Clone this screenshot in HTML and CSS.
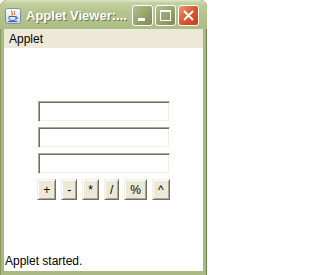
FILE: index.html
```html
<!DOCTYPE html>
<html>
<head>
<meta charset="utf-8">
<link rel="stylesheet" href="styles.css">
</head>
<body>
<div class="window">
  <div class="titlebar">
    <svg class="appicon" width="16" height="16" viewBox="0 0 16 16">
      <defs>
        <linearGradient id="ig" x1="0" y1="0" x2="0" y2="1">
          <stop offset="0" stop-color="#ffffff"/>
          <stop offset="1" stop-color="#c9d6ea"/>
        </linearGradient>
      </defs>
      <rect x="0.5" y="0.5" width="15" height="15" rx="2" fill="url(#ig)" stroke="#7f8fa8"/>
      <path d="M7 2.5 C5.5 4 8.5 5 7 7.5" fill="none" stroke="#e8761e" stroke-width="1.3"/>
      <path d="M9.5 3 C8.5 4.5 10.5 5 9.5 7" fill="none" stroke="#e8761e" stroke-width="1"/>
      <path d="M4 8.5 H11 V10.5 C11 12 9.5 12.5 7.5 12.5 C5.5 12.5 4 12 4 10.5 Z" fill="none" stroke="#3a66b0" stroke-width="1"/>
      <path d="M11 9 C13 9 13 11 11 11" fill="none" stroke="#3a66b0" stroke-width="1"/>
      <path d="M3 13.5 H12" stroke="#3a66b0" stroke-width="1"/>
    </svg>
    <span class="title">Applet Viewer:...</span>
    <div class="controls">
      <div class="ctl ctl-min">
        <svg width="21" height="21" viewBox="0 0 21 21"><rect x="6" y="13" width="7" height="3" fill="#fff"/></svg>
      </div>
      <div class="ctl ctl-max">
        <svg width="21" height="21" viewBox="0 0 21 21"><rect x="5.5" y="5.5" width="10" height="10" fill="none" stroke="#fff"/><rect x="5" y="5" width="11" height="2" fill="#fff"/></svg>
      </div>
      <div class="ctl ctl-close">
        <svg width="21" height="21" viewBox="0 0 21 21"><path d="M6 6 L15 15 M15 6 L6 15" stroke="#fff" stroke-width="2"/></svg>
      </div>
    </div>
  </div>
  <div class="frame">
    <div class="menubar"><span class="menu-item">Applet</span></div>
    <div class="content">
      <div class="applet">
        <div class="field"></div>
        <div class="field"></div>
        <div class="field"></div>
        <div class="buttons">
          <div class="btn">+</div>
          <div class="btn">-</div>
          <div class="btn">*</div>
          <div class="btn">/</div>
          <div class="btn">%</div>
          <div class="btn">^</div>
        </div>
      </div>
      <div class="status">Applet started.</div>
    </div>
  </div>
</div>
</body>
</html>
```
FILE: styles.css
```css
html, body {
  margin: 0;
  padding: 0;
  background: #ffffff;
}

.window {
  width: 207px;
  height: 275px;
  display: flex;
  flex-direction: column;
  background: #a9b981;
  border-radius: 7px 7px 0 0;
  overflow: hidden;
  box-shadow: inset 1px 0 0 #8a9b5e, inset -1px 0 0 #6f8449;
}

.titlebar {
  height: 29px;
  flex: none;
  display: flex;
  align-items: center;
  padding: 0 8px 0 5px;
  box-sizing: border-box;
  background: linear-gradient(#dfe6c6 0, #c3d09f 3px, #b6c490 40%, #aebd85 100%);
  border-radius: 7px 7px 0 0;
}

.appicon {
  flex: none;
  margin-top: 3px;
}

.title {
  flex: 1;
  margin-left: 5px;
  margin-top: 1px;
  font-family: "Liberation Sans", Arial, sans-serif;
  font-weight: bold;
  font-size: 13px;
  color: #ffffff;
  text-shadow: 1px 1px 0 #6b7a45;
  white-space: nowrap;
}

.controls {
  display: flex;
  gap: 2px;
  margin-top: 2px;
}

.ctl {
  width: 21px;
  height: 21px;
  box-sizing: border-box;
  border: 1px solid #ffffff;
  border-radius: 3px;
  display: flex;
  align-items: center;
  justify-content: center;
  overflow: hidden;
}

.ctl svg {
  flex: none;
}

.ctl-min, .ctl-max {
  background: linear-gradient(135deg, #b3c08e 0, #949f68 60%, #7f8c55 100%);
}

.ctl-close {
  background: linear-gradient(135deg, #eb9b7c 0, #d9572f 50%, #c2411d 100%);
}

.frame {
  flex: 1;
  display: flex;
  flex-direction: column;
  padding: 0 4px 4px 4px;
  min-height: 0;
}

.menubar {
  height: 19px;
  flex: none;
  background: #ece9d8;
  display: flex;
  align-items: center;
}

.menu-item {
  margin-left: 5px;
  font-family: "Liberation Sans", Tahoma, sans-serif;
  font-size: 12px;
  color: #000000;
}

.content {
  flex: 1;
  background: #ffffff;
  display: flex;
  flex-direction: column;
}

.applet {
  flex: 1;
  display: flex;
  flex-direction: column;
  align-items: center;
  padding-top: 53px;
  gap: 5px;
}

.field {
  width: 132px;
  height: 21px;
  box-sizing: border-box;
  background: #ffffff;
  border: 1px solid;
  border-color: #aca899 #ffffff #ffffff #aca899;
  box-shadow: inset 1px 1px 0 #716f64, inset -1px -1px 0 #f1efe2;
}

.buttons {
  display: flex;
  gap: 5px;
}

.btn {
  height: 21px;
  box-sizing: border-box;
  padding: 0 5px;
  background: #ece9d8;
  border: 1px solid;
  border-color: #f1efe2 #716f64 #716f64 #f1efe2;
  box-shadow: inset 1px 1px 0 #ffffff, inset -1px -1px 0 #aca899;
  font-family: "Liberation Sans", Arial, sans-serif;
  font-size: 12px;
  color: #000000;
  display: flex;
  align-items: center;
  justify-content: center;
}

.status {
  height: 14px;
  line-height: 14px;
  padding: 0 0 3px 1px;
  font-family: "Liberation Sans", Arial, sans-serif;
  font-size: 12px;
  color: #000000;
}
```
